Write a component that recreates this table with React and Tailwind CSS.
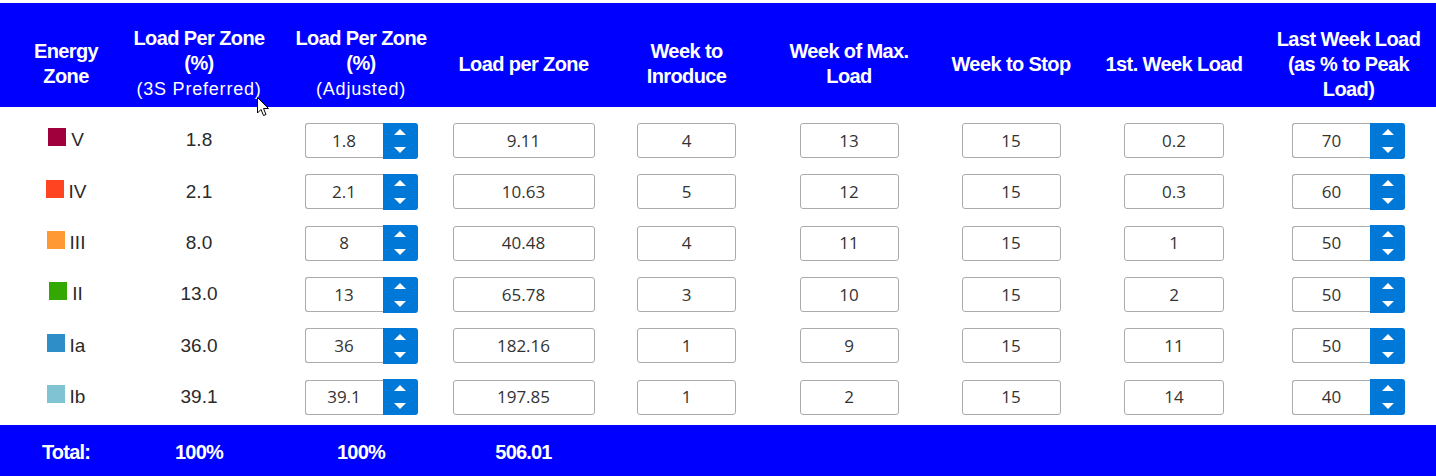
import React from "react";

const COLS =
  "grid grid-cols-[132px_148px_162px_163px_163px_162px_162px_169px_1fr]";

const rows = [
  { label: "V", color: "#a0003c", pref: "1.8", adj: "1.8", load: "9.11", intro: "4", max: "13", stop: "15", first: "0.2", last: "70" },
  { label: "IV", color: "#ff4422", pref: "2.1", adj: "2.1", load: "10.63", intro: "5", max: "12", stop: "15", first: "0.3", last: "60" },
  { label: "III", color: "#ff9933", pref: "8.0", adj: "8", load: "40.48", intro: "4", max: "11", stop: "15", first: "1", last: "50" },
  { label: "II", color: "#33a800", pref: "13.0", adj: "13", load: "65.78", intro: "3", max: "10", stop: "15", first: "2", last: "50" },
  { label: "Ia", color: "#2e8fc8", pref: "36.0", adj: "36", load: "182.16", intro: "1", max: "9", stop: "15", first: "11", last: "50" },
  { label: "Ib", color: "#80c4d3", pref: "39.1", adj: "39.1", load: "197.85", intro: "1", max: "2", stop: "15", first: "14", last: "40" },
];

function TextBox({ value, w }) {
  return (
    <div
      className={`${w} h-[35px] border border-[#ababab] rounded-[3px] bg-white flex items-center justify-center text-[17px] text-[#333333] font-['Open_Sans',sans-serif]`}
    >
      {value}
    </div>
  );
}

function Spinner({ value }) {
  return (
    <div className="w-[113px] h-[36px] flex">
      <div className="flex-1 h-[35px] mt-[0.5px] border border-r-0 border-[#ababab] rounded-l-[3px] bg-white flex items-center justify-center text-[17px] text-[#333333] font-['Open_Sans',sans-serif]">
        {value}
      </div>
      <div className="w-[35px] h-[36px] bg-[#0078d7] rounded-r-[3px] flex flex-col items-center justify-center gap-[12px]">
        <svg width="12" height="6" viewBox="0 0 12 6">
          <path d="M0 6 L6 0 L12 6 Z" fill="#ffffff" />
        </svg>
        <svg width="12" height="6" viewBox="0 0 12 6">
          <path d="M0 0 L12 0 L6 6 Z" fill="#ffffff" />
        </svg>
      </div>
    </div>
  );
}

export default function App() {
  return (
    <div className="relative w-[1436px] h-[476px] bg-white overflow-hidden pt-[3px] font-['Liberation_Sans',Arial,sans-serif]">
      {/* Header */}
      <div
        className={`${COLS} h-[104px] bg-[#0000ff] pt-[18px] items-center text-white font-bold text-[20px] leading-[25px] tracking-[-0.6px] text-center whitespace-nowrap`}
      >
        <div>Energy<br />Zone</div>
        <div className="pr-[14px]">
          Load Per Zone<br />(%)<br />
          <span className="font-normal text-[18px] tracking-[0.8px]">(3S Preferred)</span>
        </div>
        <div>
          Load Per Zone<br />(%)<br />
          <span className="font-normal text-[18px] tracking-[0.8px]">(Adjusted)</span>
        </div>
        <div>Load per Zone</div>
        <div>Week to<br />Inroduce</div>
        <div>Week of Max.<br />Load</div>
        <div>Week to Stop</div>
        <div className="pr-[5px]">1st. Week Load</div>
        <div>Last Week Load<br />(as % to Peak<br />Load)</div>
      </div>

      {/* Body */}
      <div className="h-[318px] pt-[8px]">
        {rows.map((r) => (
          <div key={r.label} className={`${COLS} h-[51.3px] items-center`}>
            <div className="text-center text-[19px] text-[#2a2a2a]">
              <span
                className="inline-block w-[18px] h-[18px] align-baseline mr-[5px]"
                style={{ backgroundColor: r.color }}
              />
              {r.label}
            </div>
            <div className="pr-[14px] text-center text-[19px] text-[#2a2a2a]">{r.pref}</div>
            <div className="flex justify-center">
              <Spinner value={r.adj} />
            </div>
            <div className="flex justify-center">
              <TextBox value={r.load} w="w-[142px]" />
            </div>
            <div className="flex justify-center">
              <TextBox value={r.intro} w="w-[99px]" />
            </div>
            <div className="flex justify-center">
              <TextBox value={r.max} w="w-[99px]" />
            </div>
            <div className="flex justify-center">
              <TextBox value={r.stop} w="w-[99px]" />
            </div>
            <div className="flex justify-center pr-[5px]">
              <TextBox value={r.first} w="w-[100px]" />
            </div>
            <div className="flex justify-center">
              <Spinner value={r.last} />
            </div>
          </div>
        ))}
      </div>

      {/* Footer */}
      <div
        className={`${COLS} h-[51px] bg-[#0000ff] pt-[3px] items-center text-white font-bold text-[20px] tracking-[-0.8px] text-center`}
      >
        <div>Total:</div>
        <div className="pr-[14px]">100%</div>
        <div>100%</div>
        <div>506.01</div>
        <div />
        <div />
        <div />
        <div />
        <div />
      </div>

      {/* Mouse cursor overlay */}
      <svg
        className="absolute left-[257px] top-[97px]"
        width="13"
        height="20"
        viewBox="0 0 13 20"
      >
        <path
          d="M0.5 0.5 L0.5 16 L4 12.5 L6.5 18.5 L9 17.5 L6.5 11.5 L11.5 11.5 Z"
          fill="#ffffff"
          stroke="#000000"
          strokeWidth="1"
          strokeLinejoin="round"
        />
      </svg>
    </div>
  );
}
